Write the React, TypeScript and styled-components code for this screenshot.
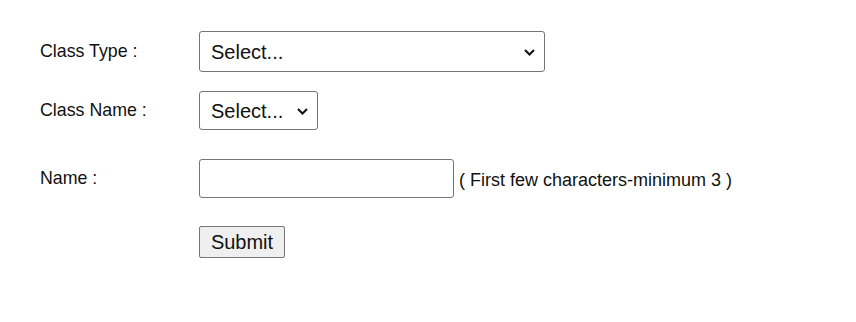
import styled, { createGlobalStyle } from 'styled-components'

const GlobalStyle = createGlobalStyle`
  html, body {
    margin: 0;
    padding: 0;
    background: #ffffff;
  }
  body {
    font-family: Arial, "Liberation Sans", sans-serif;
    color: #111;
  }
`

const Form = styled.form`
  display: grid;
  grid-template-columns: 159px auto;
  align-items: center;
  padding: 31px 0 0 40px;
`

interface RowProps {
  gap?: number
}

const Label = styled.label<RowProps>`
  font-size: 17.8px;
  color: #111;
  margin-bottom: ${({ gap }) => gap ?? 0}px;
`

const Field = styled.div<RowProps>`
  display: flex;
  align-items: center;
  margin-bottom: ${({ gap }) => gap ?? 0}px;
`

const SelectWrap = styled.div`
  position: relative;
  display: inline-flex;
`

interface SelectProps {
  wide?: boolean
}

const Select = styled.select<SelectProps>`
  appearance: none;
  -webkit-appearance: none;
  font-family: Arial, "Liberation Sans", sans-serif;
  font-size: 20px;
  color: #111;
  height: ${({ wide }) => (wide ? 41 : 39)}px;
  width: ${({ wide }) => (wide ? '346px' : '119px')};
  padding: 0 30px 0 11px;
  border: 1px solid #767676;
  border-radius: 3px;
  background: #fff;
`

const Chevron = styled.svg`
  position: absolute;
  right: 10px;
  top: 50%;
  margin-top: -3px;
  width: 11px;
  height: 7px;
  pointer-events: none;
`

const TextInput = styled.input`
  width: 255px;
  height: 39px;
  box-sizing: border-box;
  border: 1px solid #767676;
  border-radius: 3px;
  font-size: 20px;
  padding: 0 8px;
`

const Hint = styled.span`
  font-size: 18px;
  margin-left: 5px;
  padding-top: 4px;
  color: #111;
`

const Button = styled.button`
  font-family: Arial, "Liberation Sans", sans-serif;
  font-size: 20px;
  color: #111;
  height: 32px;
  width: 86px;
  padding: 0;
  background: #efefef;
  border: 1px solid #767676;
  border-radius: 2px;
`

function ArrowDown() {
  return (
    <Chevron viewBox="0 0 11 7">
      <path d="M1 1 L5.5 5.5 L10 1" fill="none" stroke="#111" strokeWidth="2" />
    </Chevron>
  )
}

export default function App() {
  return (
    <>
      <GlobalStyle />
      <Form onSubmit={(e) => e.preventDefault()}>
        <Label gap={19}>Class Type :</Label>
        <Field gap={19}>
          <SelectWrap>
            <Select wide>
              <option>Select...</option>
            </Select>
            <ArrowDown />
          </SelectWrap>
        </Field>

        <Label gap={29}>Class Name :</Label>
        <Field gap={29}>
          <SelectWrap>
            <Select>
              <option>Select...</option>
            </Select>
            <ArrowDown />
          </SelectWrap>
        </Field>

        <Label gap={28}>Name :</Label>
        <Field gap={28}>
          <TextInput type="text" />
          <Hint>( First few characters-minimum 3 )</Hint>
        </Field>

        <span />
        <Field>
          <Button type="submit">Submit</Button>
        </Field>
      </Form>
    </>
  )
}
